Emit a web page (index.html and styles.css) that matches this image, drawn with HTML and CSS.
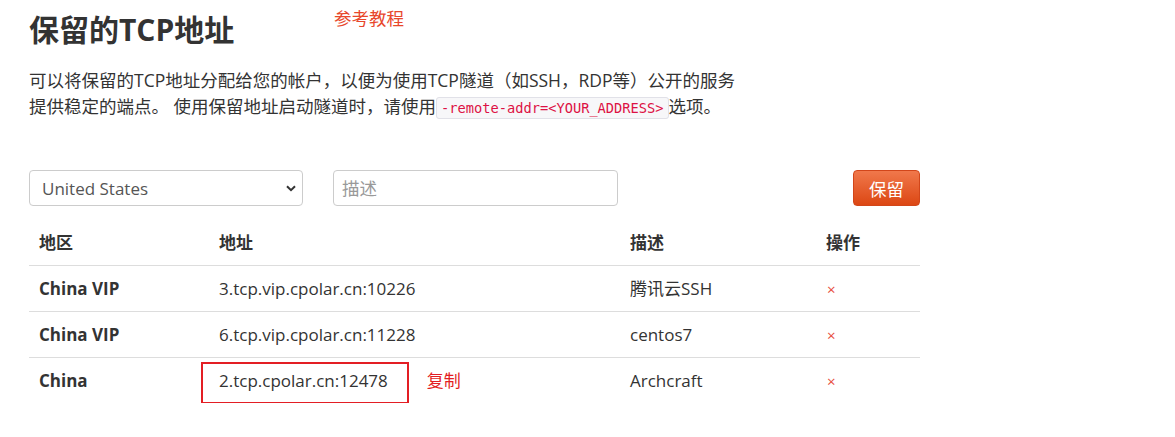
FILE: index.html
```html
<!DOCTYPE html>
<html lang="zh-CN">
<head>
    <meta charset="UTF-8">
    <meta name="viewport" content="width=device-width, initial-scale=1.0">
    <title>保留的TCP地址</title>
    <link rel="stylesheet" href="styles.css">
</head>
<body>
    <div class="container">
        <h1>保留的TCP地址</h1>
        <a href="#" class="tutorial-link">参考教程</a>

        <p class="intro">
            可以将保留的TCP地址分配给您的帐户，以便为使用TCP隧道（如SSH，RDP等）公开的服务<br>提供稳定的端点。 使用保留地址启动隧道时，请使用<code>-remote-addr=&lt;YOUR_ADDRESS&gt;</code>选项。
        </p>

        <form class="reserve-form">
            <div class="select-wrap">
                <select name="region">
                    <option>United States</option>
                    <option>China</option>
                    <option>China VIP</option>
                </select>
                <svg class="select-arrow" width="10" height="7" viewBox="0 0 10 7">
                    <path d="M1 1.2 L5 5.2 L9 1.2" fill="none" stroke="#333" stroke-width="2"/>
                </svg>
            </div>
            <input type="text" name="description" placeholder="描述">
            <button type="submit">保留</button>
        </form>

        <table class="address-table">
            <thead>
                <tr>
                    <th class="col-region">地区</th>
                    <th class="col-address">地址</th>
                    <th class="col-desc">描述</th>
                    <th>操作</th>
                </tr>
            </thead>
            <tbody>
                <tr>
                    <td class="region">China VIP</td>
                    <td>3.tcp.vip.cpolar.cn:10226</td>
                    <td>腾讯云SSH</td>
                    <td><a href="#" class="delete">×</a></td>
                </tr>
                <tr>
                    <td class="region">China VIP</td>
                    <td>6.tcp.vip.cpolar.cn:11228</td>
                    <td>centos7</td>
                    <td><a href="#" class="delete">×</a></td>
                </tr>
                <tr>
                    <td class="region">China</td>
                    <td><span class="highlight">2.tcp.cpolar.cn:12478</span><span class="copy-note">复制</span></td>
                    <td>Archcraft</td>
                    <td><a href="#" class="delete">×</a></td>
                </tr>
            </tbody>
        </table>
    </div>
</body>
</html>
```

FILE: styles.css
```css
body {
    font-family: "Open Sans", "Noto Sans CJK SC", sans-serif;
    color: #333;
    background: #fff;
    margin: 0;
    padding: 0;
}
.container {
    position: relative;
    width: 891px;
    padding: 13px 0 0 29px;
}
h1 {
    margin: 0;
    font-size: 30px;
    line-height: 34px;
    font-weight: bold;
    color: #333;
}
.tutorial-link {
    position: absolute;
    left: 334px;
    top: 5px;
    font-size: 17.5px;
    color: #e8472b;
    text-decoration: none;
}
.intro {
    margin: 20px 0 0;
    font-size: 17.5px;
    line-height: 26px;
}
code {
    font-family: "DejaVu Sans Mono", monospace;
    font-size: 13.7px;
    color: #dd1144;
    background: #f7f7f9;
    border: 1px solid #e1e1e8;
    border-radius: 3px;
    padding: 2px 4px;
}
.reserve-form {
    display: flex;
    align-items: center;
    margin-top: 49px;
    margin-bottom: 15px;
}
.select-wrap {
    position: relative;
    width: 274px;
}
select {
    appearance: none;
    -webkit-appearance: none;
    width: 100%;
    height: 36px;
    padding: 0 12px;
    border: 1px solid #ccc;
    border-radius: 4px;
    background: #fff;
    font-family: inherit;
    font-size: 17px;
    color: #555;
}
.select-arrow {
    position: absolute;
    right: 7px;
    top: 15px;
}
input {
    width: 285px;
    height: 36px;
    box-sizing: border-box;
    margin-left: 30px;
    padding: 0 8px;
    border: 1px solid #ccc;
    border-radius: 4px;
    font-family: inherit;
    font-size: 17.5px;
    color: #555;
}
input::placeholder {
    color: #999;
}
button {
    margin-left: auto;
    width: 67px;
    height: 36px;
    background: linear-gradient(#f0784b, #dc4714);
    border: 1px solid #d2461a;
    border-radius: 4px;
    color: #fff;
    font-family: inherit;
    font-size: 17.5px;
    cursor: pointer;
}
.address-table {
    width: 891px;
    border-collapse: collapse;
    font-size: 17px;
}
.address-table th {
    height: 44px;
    box-sizing: border-box;
    text-align: left;
    font-weight: bold;
    padding: 0 10px;
    line-height: 20px;
    border-bottom: 1px solid #ddd;
}
.address-table tbody tr {
    height: 46px;
}
.col-region {
    width: 180px;
}
.col-address {
    width: 411px;
}
.col-desc {
    width: 196px;
}
.address-table td {
    padding: 2px 10px 0;
    line-height: 20px;
    border-top: 1px solid #ddd;
}
.address-table tbody tr:first-child td {
    border-top: none;
}
.address-table .region {
    font-weight: bold;
}
.highlight {
    position: relative;
}
.highlight::after {
    content: "";
    position: absolute;
    left: -18px;
    right: -21px;
    top: -7px;
    bottom: -12px;
    border: 2px solid #e31e24;
}
.copy-note {
    margin-left: 39px;
    color: #e31e24;
}
.delete {
    color: #e74c3c;
    text-decoration: none;
    font-size: 15px;
    padding-left: 1px;
}
```
